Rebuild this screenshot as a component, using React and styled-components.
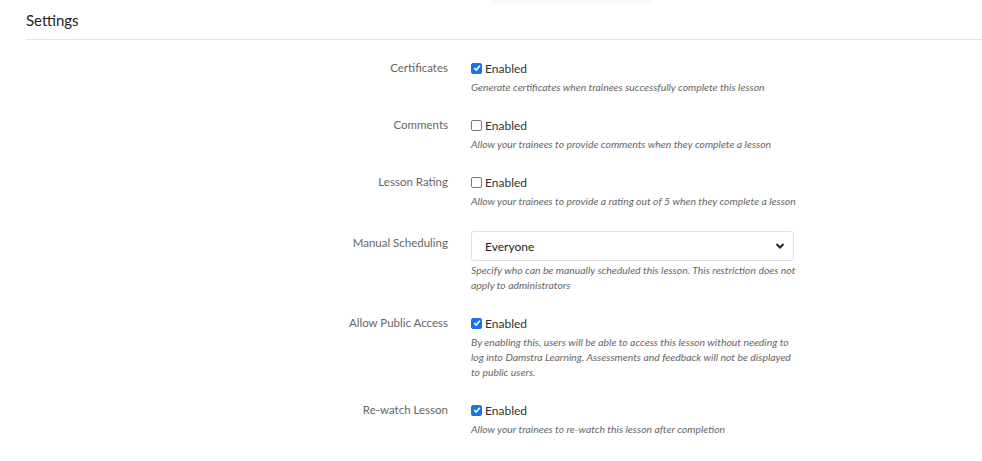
import React from 'react'
import styled, { createGlobalStyle } from 'styled-components'

const GLOBAL = createGlobalStyle`
	body {
		margin: 0;
		background: #fff;
		font-family: Lato, 'Open Sans', sans-serif;
		color: #333;
	}
`

const PAGE = styled.div`
	padding: 0 0 0 26px;
	position: relative;
`

const TOP_SHADOW = styled.div`
	position: absolute;
	top: -6px;
	left: 490px;
	width: 160px;
	height: 6px;
	box-shadow: 0 2px 5px rgba(0, 0, 0, 0.06);
`

const TITLE = styled.h2`
	margin: 0;
	padding: 11px 0 10px;
	font-size: 15px;
	line-height: 18px;
	font-weight: 400;
	color: #222;
	border-bottom: 1px solid #e6e6e6;
`

const FORM = styled.div`
	padding-top: 18px;
`

const ROW = styled.div`
	display: grid;
	grid-template-columns: 422px 326px;
	column-gap: 23px;
	margin-bottom: 20px;
`

const LABEL = styled.div`
	text-align: right;
	font-size: 11.5px;
	line-height: 20px;
	color: #666;
	padding-top: ${({ offset }) => offset || 0}px;
`

const CHECK_LINE = styled.label`
	display: flex;
	align-items: center;
	height: 20px;
	font-size: 12px;
	color: #333;
`

const BOX = styled.span`
	width: 11px;
	height: 11px;
	box-sizing: border-box;
	border-radius: 2px;
	margin-right: 3px;
	display: flex;
	align-items: center;
	justify-content: center;
	background: ${({ checked }) => (checked ? '#1a73e8' : '#fff')};
	border: 1px solid ${({ checked }) => (checked ? '#1a73e8' : '#777')};
`

const HELP = styled.p`
	margin: 2px 0 0;
	font-size: 10.4px;
	line-height: 15px;
	font-style: italic;
	color: #666;
`

const SELECT = styled.div`
	margin-top: 2px;
	height: 30px;
	box-sizing: border-box;
	border: 1px solid #e0e0e0;
	border-radius: 3px;
	display: flex;
	align-items: center;
	justify-content: space-between;
	padding: 0 8px 0 13px;
	font-size: 12px;
	color: #222;
	width: 323px;
`

const CHECKBOX = ({ checked }) => (
	<CHECK_LINE>
		<BOX checked={checked}>
			{checked && (
				<svg width="8" height="8" viewBox="0 0 8 8">
					<path
						d="M1.2 4.2 L3.2 6 L6.8 1.8"
						fill="none"
						stroke="#fff"
						strokeWidth="1.6"
					/>
				</svg>
			)}
		</BOX>
		Enabled
	</CHECK_LINE>
)

const SETTINGS = [
	{
		label: 'Certificates',
		checked: true,
		help: 'Generate certificates when trainees successfully complete this lesson',
	},
	{
		label: 'Comments',
		checked: false,
		help: 'Allow your trainees to provide comments when they complete a lesson',
	},
	{
		label: 'Lesson Rating',
		checked: false,
		help: 'Allow your trainees to provide a rating out of 5 when they complete a lesson',
	},
	{
		label: 'Manual Scheduling',
		select: 'Everyone',
		help: 'Specify who can be manually scheduled this lesson. This restriction does not apply to administrators',
	},
	{
		label: 'Allow Public Access',
		checked: true,
		help: 'By enabling this, users will be able to access this lesson without needing to log into Damstra Learning. Assessments and feedback will not be displayed to public users.',
	},
	{
		label: 'Re-watch Lesson',
		checked: true,
		help: 'Allow your trainees to re-watch this lesson after completion',
	},
]

const App = () => {
	return (
		<PAGE>
			<GLOBAL />
			<TOP_SHADOW />
			<TITLE>Settings</TITLE>
			<FORM>
				{SETTINGS.map((s) => (
					<ROW key={s.label}>
						<LABEL offset={s.select ? 4 : 0}>{s.label}</LABEL>
						<div>
							{s.select ? (
								<SELECT>
									{s.select}
									<svg width="10" height="8" viewBox="0 0 10 8">
										<path
											d="M1.5 2 L5 5.5 L8.5 2"
											fill="none"
											stroke="#222"
											strokeWidth="2"
										/>
									</svg>
								</SELECT>
							) : (
								<CHECKBOX checked={s.checked} />
							)}
							<HELP>{s.help}</HELP>
						</div>
					</ROW>
				))}
			</FORM>
		</PAGE>
	)
}

export default App
